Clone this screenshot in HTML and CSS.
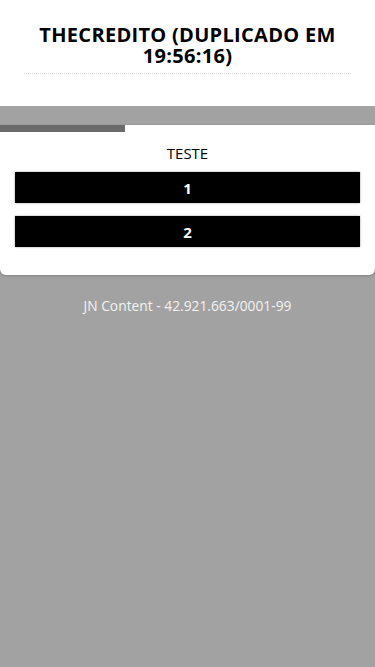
FILE: index.html
```html
<!DOCTYPE html>
<html lang="pt-BR">
<head>
  <meta charset="UTF-8">
  <meta name="viewport" content="width=device-width, initial-scale=1.0">
  <title>Thecredito</title>
  <link rel="stylesheet" href="styles.css">
</head>
<body>
  <header class="top">
    <h1 class="title">THECREDITO (DUPLICADO EM 19:56:16)</h1>
    <div class="divider"></div>
  </header>

  <main class="content">
    <div class="card">
      <div class="progress"><div class="progress-fill"></div></div>
      <p class="question">TESTE</p>
      <button class="option">1</button>
      <button class="option">2</button>
    </div>
    <p class="footer">JN Content - 42.921.663/0001-99</p>
  </main>
</body>
</html>
```

FILE: styles.css
```css
body {
  margin: 0;
  font-family: "Open Sans", "Noto Sans", sans-serif;
  background-color: #a2a2a2;
  min-height: 100vh;
}
.top {
  background-color: #fff;
  padding: 24px 24px 32px;
}
.title {
  margin: 0;
  font-size: 20px;
  line-height: 21px;
  letter-spacing: 0.3px;
  font-weight: 700;
  text-align: center;
  color: #000;
  padding: 0 0 7px;
}
.divider {
  border-top: 1px dotted #e2e2e2;
}
.content {
  padding-top: 19px;
}
.card {
  background-color: #fff;
  border-radius: 0 0 6px 6px;
  padding: 0 15px 28px;
  box-shadow: 0 1px 3px rgba(0, 0, 0, 0.2);
}
.progress {
  height: 7px;
  margin: 0 -15px;
}
.progress-fill {
  width: 125px;
  height: 100%;
  background-color: #6a6a6a;
}
.question {
  margin: 11px 0 9px;
  font-size: 15px;
  line-height: 20px;
  text-align: center;
  color: #000;
}
.option {
  display: block;
  width: 100%;
  height: 31px;
  margin-bottom: 13px;
  border: none;
  background-color: #000;
  color: #fff;
  font-family: inherit;
  font-size: 15px;
  font-weight: 700;
  box-shadow: 0 0 2px rgba(0, 0, 0, 0.4);
  cursor: pointer;
}
.option:last-child {
  margin-bottom: 0;
}
.footer {
  margin: 21px 0 0;
  text-align: center;
  font-size: 13.8px;
  color: #f2f2f2;
}
```
